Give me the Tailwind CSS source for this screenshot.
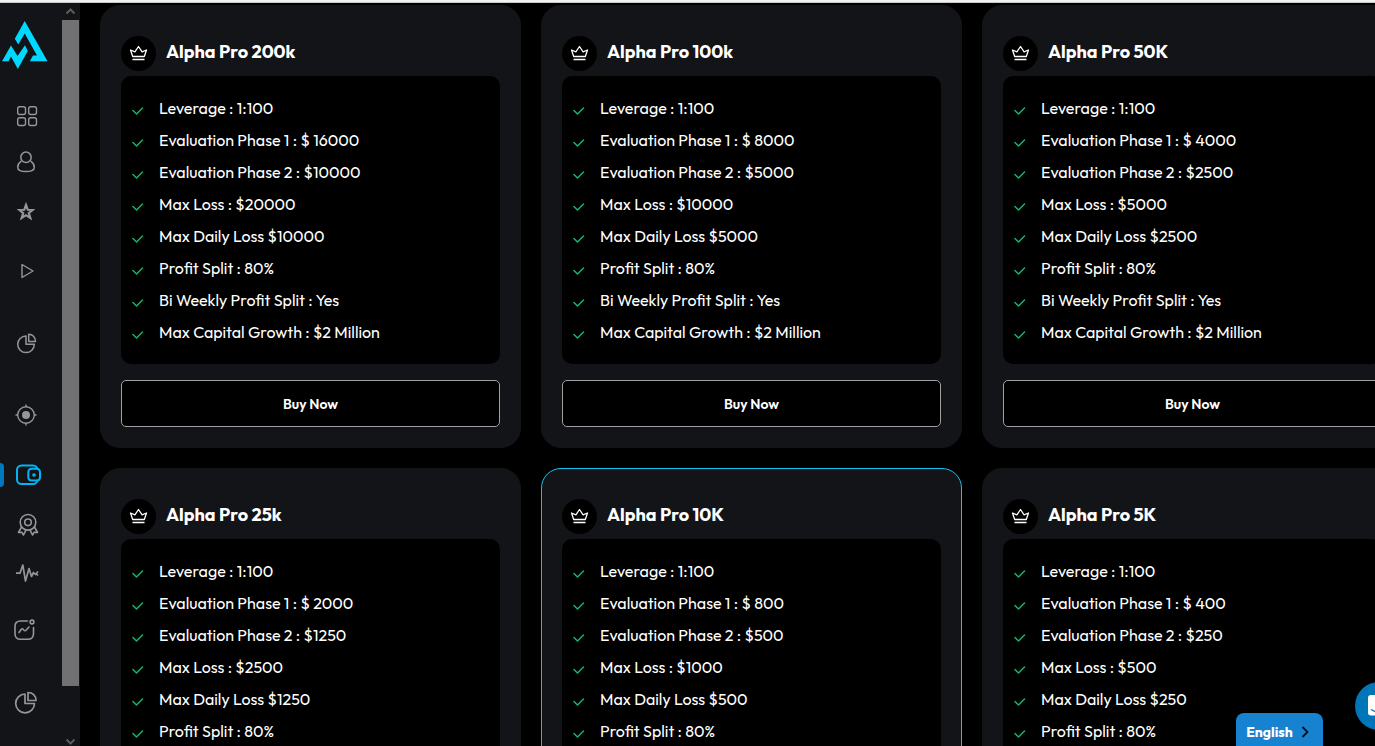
<!DOCTYPE html>
<html lang="en">
<head>
<meta charset="utf-8">
<meta name="viewport" content="width=device-width, initial-scale=1">
<title>Alpha Pro plans</title>
<script src="https://cdn.jsdelivr.net/npm/@tailwindcss/browser@4"></script>
</head>
<body class="flex h-screen flex-col overflow-hidden bg-black font-['Outfit','Lato',sans-serif] text-white">
<svg class="hidden" aria-hidden="true">
  <symbol id="crown" viewBox="0 0 20 18"><path d="M3.700 11.500 1.500 5 5.900 6.800 9.500 1.500 13.100 6.800 17.500 5 15.300 11.500zM3.500 14.500h12" fill="none" stroke="currentColor" stroke-width="1.300" stroke-linejoin="round"/></symbol>
  <symbol id="check" viewBox="0 0 12 10"><path d="M1 4.500 4.500 8 10.500 2" fill="none" stroke="currentColor" stroke-width="1.500" stroke-linecap="round" stroke-linejoin="round"/></symbol>
</svg>

<div class="h-[3px] shrink-0 border-b border-[#c8c8c8] bg-[#f2f2f2]"></div>

<div class="flex min-h-0 flex-1">
  <aside class="flex w-20 shrink-0 overflow-hidden bg-[#131418]">
    <nav class="w-[62px] shrink-0 text-[#969698]" aria-label="Main">
      <a href="#" aria-label="Home" class="block pt-[17px] text-[#00d8ff]">
        <svg class="h-[50px] w-[50px]" viewBox="0 0 50 50" fill="currentColor"><path d="M24.7 1 47.5 41.3H29.8L33 35.5H37L24.7 13.5 18.3 24.5 14.8 18.7zM2 41.3 11 25.5 17.5 36 25 25.3 27.8 31 17.8 49 11 36.5 8.500 41.3z"/></svg>
      </a>
      <a href="#" aria-label="Dashboard" class="mt-[34px] block h-6"><svg class="h-6 w-[54px]" viewBox="0 0 54 24" fill="none" stroke="currentColor" stroke-width="1.4"><rect x="17.7" y="2.7" width="7.8" height="7.8" rx="2"/><rect x="28.7" y="2.7" width="7.8" height="7.8" rx="2"/><rect x="17.7" y="13.7" width="7.8" height="7.8" rx="2"/><rect x="28.7" y="13.7" width="7.8" height="7.8" rx="2"/></svg></a>
      <a href="#" aria-label="Profile" class="mt-[22px] block h-6"><svg class="h-6 w-[54px]" viewBox="0 0 54 24" fill="none" stroke="currentColor" stroke-width="1.5"><circle cx="26" cy="7.3" r="5.2"/><path d="M21.3 11.2c-2.200 1.500-3.600 3.800-3.600 6 0 3 3.600 4.400 8.300 4.400s8.300-1.400 8.300-4.400c0-2.200-1.400-4.500-3.600-6"/></svg></a>
      <a href="#" aria-label="Favourites" class="mt-[25px] block h-6"><svg class="h-6 w-[54px]" viewBox="0 0 54 24" fill="none" stroke="currentColor" stroke-width="2.200"><path d="M26 6 27.800 10.800 32.500 11 28.800 14.100 30.300 19 26 16.200 21.700 19 23.200 14.100 19.500 11 24.200 10.800z"/></svg></a>
      <a href="#" aria-label="Start" class="mt-9 block h-6"><svg class="h-6 w-[54px]" viewBox="0 0 54 24" fill="none" stroke="currentColor" stroke-width="1.4" stroke-linejoin="round"><path d="M22 5.500V18.500L33 12z"/></svg></a>
      <a href="#" aria-label="Statistics" class="mt-12 block h-6"><svg class="h-6 w-[54px]" viewBox="0 0 54 24" fill="none" stroke="currentColor" stroke-width="1.500" stroke-linejoin="round"><path d="M26 5A8.300 8.300 0 1 0 34.300 13.300H26zM28.700 3.300V10.500H35.500C35.500 6 32.500 3.300 28.700 3.300z"/></svg></a>
      <a href="#" aria-label="Targets" class="mt-12 block h-6"><svg class="h-6 w-[54px]" viewBox="0 0 54 24" fill="none" stroke="currentColor" stroke-width="1.400"><circle cx="26" cy="12" r="8.300"/><circle cx="26" cy="12" r="4" fill="currentColor" stroke="none"/><path d="M26 1.500V4M26 20V22.500M15.500 12H18M34 12H36.500"/></svg></a>
      <a href="#" aria-label="Buy a plan" aria-current="page" class="mt-9 flex h-6 text-[#00b4f5]"><span class="w-1 rounded-r-sm bg-[#0078be]"></span><svg class="h-6 w-[50px]" viewBox="4 0 50 24" fill="none" stroke="currentColor" stroke-width="2"><rect x="17" y="2.500" width="20.500" height="18.500" rx="4.500"/><path d="M36.500 5.800H32Q28.300 5.800 28.300 9.500V14Q28.300 17.500 32 17.500H36.500Q40 17.500 40 14V9.500Q40 5.800 36.500 5.800z" fill="#131418"/><circle cx="34" cy="12" r="1.800" fill="currentColor" stroke="none"/></svg></a>
      <a href="#" aria-label="Certificates" class="mt-[26px] block h-6"><svg class="h-6 w-[54px]" viewBox="0 0 54 24" fill="none" stroke="currentColor" stroke-width="1.600" stroke-linejoin="round"><circle cx="28" cy="9.300" r="7.800"/><circle cx="28" cy="9.300" r="3.300"/><path d="M21.500 14 18.500 19.500 21.800 19.200 23.500 22 26 17.200M34.500 14 37.500 19.500 34.200 19.200 32.500 22 30 17.200"/></svg></a>
      <a href="#" aria-label="Activity" class="mt-6 block h-6"><svg class="h-6 w-[54px]" viewBox="0 0 54 24" fill="none" stroke="currentColor" stroke-width="1.700" stroke-linejoin="round"><path d="M16 12.200H20L22.800 4 25.500 20 29 7.500 31.500 15.500 33.500 11.500 35.500 13.500 38 10.500M35.500 12 38 14.500"/></svg></a>
      <a href="#" aria-label="Analysis" class="mt-[33px] block h-6"><svg class="h-6 w-[54px]" viewBox="0 0 54 24" fill="none" stroke="currentColor" stroke-width="1.600" stroke-linecap="round"><path d="M27.500 3H20.500Q15 3 15 8.500V15.500Q15 21.300 20.500 21.300H28Q33.500 21.300 33.500 15.500V9.500M19 14.500 21.300 11.300Q22.300 10.200 23.300 11.500L24 12.300Q25 13.300 26 12.200L29 9"/><circle cx="32" cy="4" r="1.900"/></svg></a>
      <a href="#" aria-label="Reports" class="mt-[49px] block h-6"><svg class="h-6 w-[54px]" viewBox="0 0 54 24" fill="none" stroke="currentColor" stroke-width="1.700" stroke-linejoin="round"><path d="M25 3A9.400 9.400 0 1 0 34.500 12.500H25zM28 1.500V9.500H36C36 4.500 32.500 1.500 28 1.500z"/></svg></a>
    </nav>
    <div class="flex w-[17px] flex-col items-center text-[#5c5c5e]">
      <svg class="h-[17px] w-[17px] shrink-0" viewBox="0 0 17 17" fill="none" stroke="currentColor" stroke-width="2"><path d="M4.500 10.500 8.500 6.500 12.500 10.500"/></svg>
      <div class="mb-[43px] w-full flex-1 bg-[#717173]"></div>
      <svg class="h-[17px] w-[17px] shrink-0" viewBox="0 0 17 17" fill="none" stroke="currentColor" stroke-width="2"><path d="M4.500 10.500 8.500 14.500 12.500 10.500"/></svg>
    </div>
  </aside>

  <main class="min-w-0 flex-1 overflow-hidden pt-0.5 pl-5">
    <div id="plans" class="grid w-[calc(100%+28px)] grid-cols-3 gap-5"></div>
  </main>
</div>

<button type="button" class="fixed right-[52px] bottom-0 flex h-[33px] w-[87px] items-center justify-center gap-2 rounded-t-lg bg-[#1782cf] pr-1 pt-1 text-sm font-bold">English
  <svg class="h-3 w-2" viewBox="0 0 8 12" fill="none" stroke="#001020" stroke-width="1.800"><path d="M1.500 1 6.500 6 1.500 11"/></svg>
</button>
<button type="button" aria-label="Open chat" class="fixed -right-7 bottom-4 flex h-12 w-12 items-center justify-center rounded-full bg-[#0075b8]">
  <svg class="h-6 w-6" viewBox="0 0 24 24"><path d="M4 1H20Q23 1 23 4V23L18 21.500H4Q1 21.500 1 18.500V4Q1 1 4 1z" fill="#fff"/><path d="M4 15.500Q12 21 20 15.500" fill="none" stroke="#0075b8" stroke-width="1.500"/></svg>
</button>

<script>
  const plans = [
    ['200k', '16000', '10000', '20000', '10000'],
    ['100k', '8000', '5000', '10000', '5000'],
    ['50K', '4000', '2500', '5000', '2500'],
    ['25k', '2000', '1250', '2500', '1250'],
    ['10K', '800', '500', '1000', '500'],
    ['5K', '400', '250', '500', '250'],
  ];
  document.getElementById('plans').innerHTML = plans.map(([name, phase1, phase2, loss, daily]) => {
    const border = name === '10K' ? 'border-[#12c2f5]' : 'border-[#131418]';
    const features = ['Leverage : 1:100', `Evaluation Phase 1 : $ ${phase1}`, `Evaluation Phase 2 : $${phase2}`,
      `Max Loss : $${loss}`, `Max Daily Loss $${daily}`, 'Profit Split : 80%', 'Bi Weekly Profit Split : Yes', 'Max Capital Growth : $2 Million'];
    return `<section class="rounded-[20px] border bg-[#131418] p-5 ${border}">
      <header class="flex gap-2.5 pt-2.5 pb-[5px]">
        <span class="flex h-[35px] w-[35px] items-center justify-center rounded-full bg-black"><svg class="h-[18px] w-5"><use href="#crown"/></svg></span>
        <h2 class="text-lg leading-8 font-bold">Alpha Pro ${name}</h2>
      </header>
      <ul class="rounded-[10px] bg-black px-[11px] py-4 text-base leading-8">
        ${features.map(f => `<li class="flex items-center gap-[15px] whitespace-nowrap"><svg class="mt-1.5 h-2.5 w-3 shrink-0 text-[#12b76a]"><use href="#check"/></svg>${f}</li>`).join('')}
      </ul>
      <button type="button" class="mt-4 h-[47px] w-full rounded-[5px] border border-[#a0a0a0] bg-black text-sm font-semibold">Buy Now</button>
    </section>`;
  }).join('');
</script>
</body>
</html>
